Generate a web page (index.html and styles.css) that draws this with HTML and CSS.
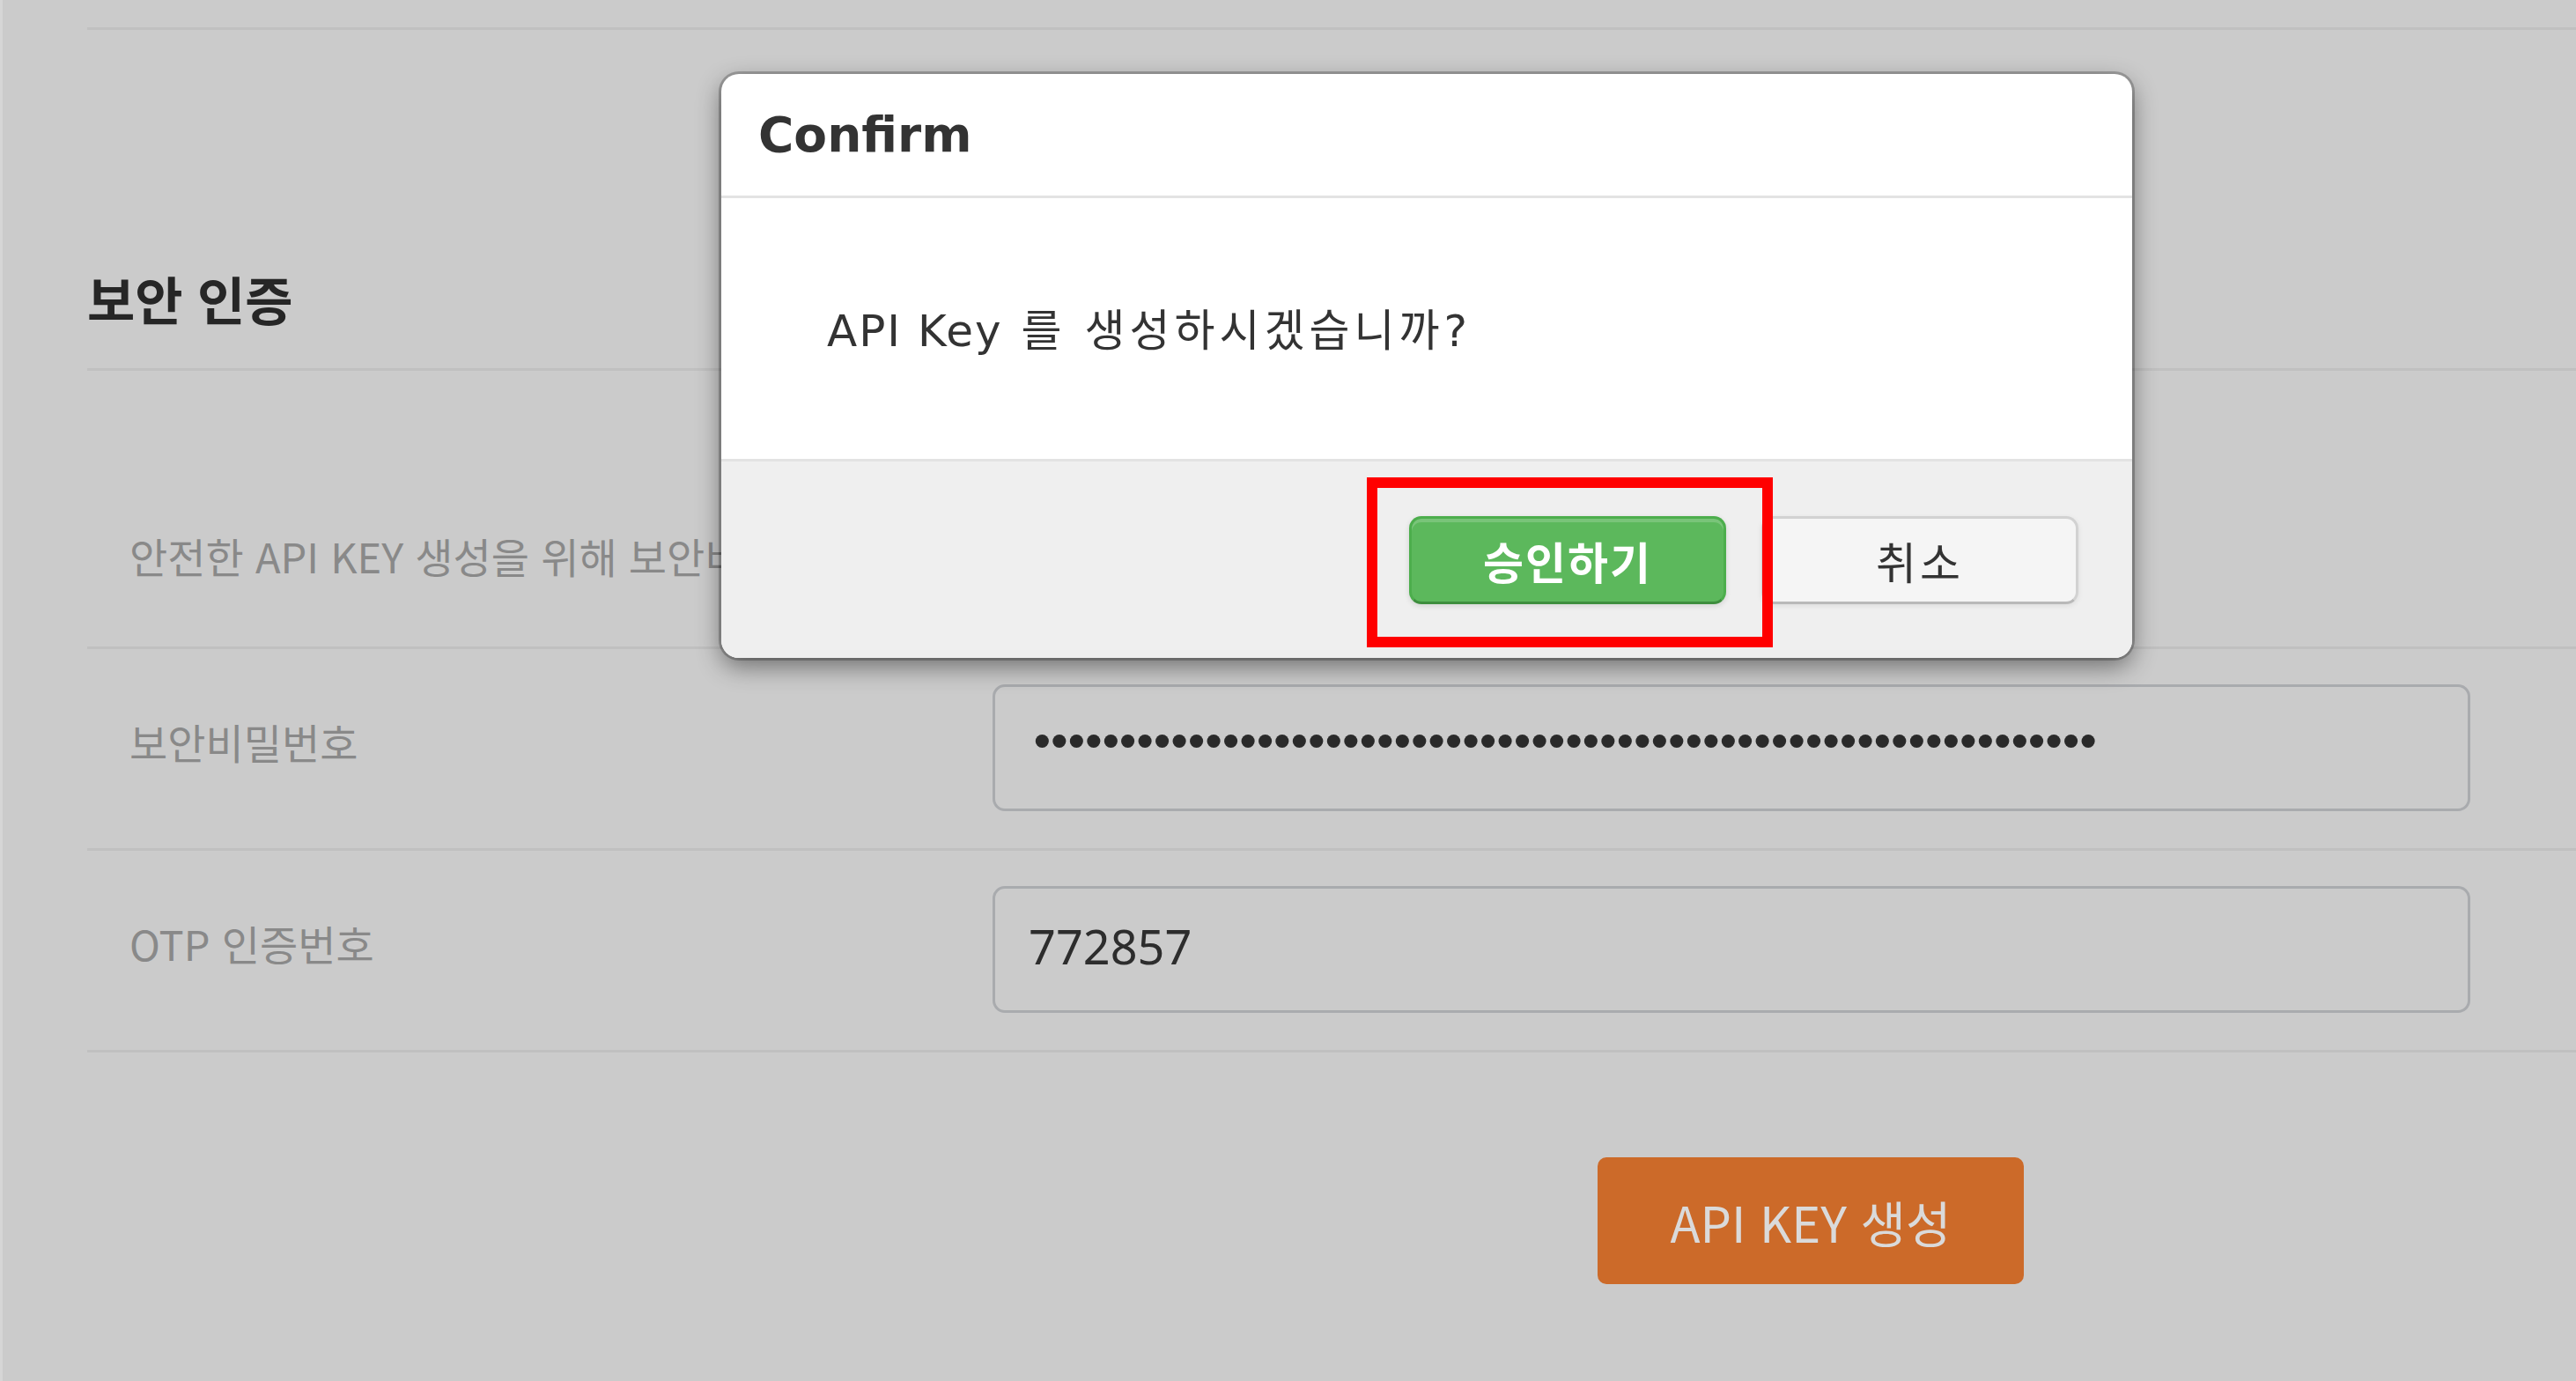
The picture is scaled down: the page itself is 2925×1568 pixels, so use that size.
FILE: index.html
```html
<!DOCTYPE html>
<html lang="ko">
<head>
<meta charset="utf-8">
<title>보안 인증</title>
<link rel="stylesheet" href="styles.css">
</head>
<body>
<div class="page">
  <section class="sec">
    <div class="sec-head"><h2 class="sec-title">보안 인증</h2></div>
    <div class="row row-info"><p class="label">안전한 API KEY 생성을 위해 보안비밀번호와 OTP 인증번호를 입력해 주세요.</p></div>
    <div class="row">
      <label class="label label-field">보안비밀번호</label>
      <div class="field"><span class="dots">••••••••••••••••••••••••••••••••••••••••••••••••••••••••••••••</span></div>
    </div>
    <div class="row">
      <label class="label label-field">OTP 인증번호</label>
      <div class="field"><span class="val">772857</span></div>
    </div>
    <div class="actions"><button class="btn-orange">API KEY 생성</button></div>
  </section>
</div>

<div class="modal">
  <div class="modal-head"><h3 class="modal-title">Confirm</h3></div>
  <div class="modal-body"><p class="msg"><span class="msg-en">API Key</span> 를 생성하시겠습니까?</p></div>
  <div class="modal-foot">
    <button class="btn btn-ok">승인하기</button>
    <button class="btn btn-cancel">취소</button>
  </div>
</div>
<div class="highlight"></div>
</body>
</html>
```

FILE: styles.css
```css
* { box-sizing: border-box; }
html, body { margin: 0; padding: 0; }
body {
  width: 2925px;
  height: 1568px;
  overflow: hidden;
  background: #cbcbcb;
  font-family: "Noto Sans", "Noto Sans CJK KR", sans-serif;
  border-left: 3px solid #d6d6d6;
  position: relative;
}
.page { padding: 31px 0 0 96px; }
.sec { border-top: 3px solid #c0c0c0; }
.sec-head {
  padding: 270px 0 44px 0;
  border-bottom: 3px solid #c0c0c0;
}
.sec-title {
  margin: 0;
  font-family: "Noto Sans CJK KR", sans-serif;
  font-weight: 700;
  font-size: 59px;
  line-height: 70px;
  color: #262626;
}
.row {
  display: flex;
  align-items: flex-start;
  border-bottom: 3px solid #c0c0c0;
  padding: 40px 0 42px 0;
}
.row-info { padding: 180px 0 73px 0; }
.label {
  margin: 0;
  padding-left: 48px;
  font-family: "Noto Sans CJK KR", sans-serif;
  font-size: 47px;
  line-height: 60px;
  color: #898989;
  white-space: nowrap;
}
.label-field {
  flex: none;
  padding-top: 35px;
  line-height: 60px;
  box-sizing: content-box;
  width: 980px;
}
.field {
  width: 1678px;
  height: 144px;
  border: 3px solid #a9abae;
  border-radius: 14px;
  display: flex;
  align-items: center;
  padding-left: 38px;
}
.dots {
  font-family: "DejaVu Sans", sans-serif;
  font-size: 52px;
  letter-spacing: -11.2px;
  color: #2a2a2a;
  margin-top: -12px;
}
.val {
  font-family: "Noto Sans", sans-serif;
  font-size: 54px;
  color: #2d2d2d;
  margin-top: -8px;
}
.actions { padding: 119px 0 0 1715px; }
.btn-orange {
  width: 484px;
  height: 144px;
  border: 0;
  border-radius: 10px;
  background: #cc6a29;
  color: #dadada;
  font-family: "Noto Sans CJK KR", sans-serif;
  font-size: 56px;
  padding: 0;
}

.modal {
  position: absolute;
  left: 816px;
  top: 84px;
  width: 1602px;
  height: 663px;
  background: #fff;
  border-radius: 20px;
  overflow: hidden;
  box-shadow: 0 0 0 3px rgba(0,0,0,0.22), 0 10px 28px rgba(0,0,0,0.45);
  display: flex;
  flex-direction: column;
}
.modal-head {
  height: 141px;
  border-bottom: 3px solid #e3e3e3;
  padding-left: 42px;
  display: flex;
  align-items: center;
}
.modal-title {
  margin: 0;
  font-family: "DejaVu Sans", sans-serif;
  font-weight: 700;
  font-size: 55px;
  color: #333;
}
.modal-body {
  height: 296px;
  display: flex;
  align-items: center;
  padding-left: 120px;
}
.msg {
  margin: 0 0 4px 0;
  font-family: "DejaVu Sans", "Noto Sans CJK KR", sans-serif;
  font-size: 50px;
  letter-spacing: 5px;
  color: #333;
}
.msg-en { letter-spacing: 2px; }
.modal-foot {
  flex: 1;
  background: #efefef;
  border-top: 3px solid #e3e3e3;
  display: flex;
  justify-content: flex-end;
  align-items: center;
  gap: 40px;
  padding-right: 61px;
}
.btn {
  width: 360px;
  height: 100px;
  border-radius: 14px;
  font-family: "Noto Sans CJK KR", sans-serif;
  font-size: 50px;
  padding: 0;
}
.btn-ok {
  background: #5cb85c;
  border: 3px solid #4cae4c;
  border-bottom-color: #3e8e3e;
  color: #fff;
  font-weight: 700;
  letter-spacing: 2px;
  box-shadow: inset 0 4px 0 rgba(255,255,255,0.18), 0 2px 6px rgba(0,0,0,0.12);
}
.btn-cancel {
  background: #f5f5f5;
  border: 3px solid #d2d2d2;
  border-bottom-color: #b9b9b9;
  color: #333;
  letter-spacing: 4px;
  box-shadow: 0 2px 6px rgba(0,0,0,0.08);
}
.highlight {
  position: absolute;
  left: 1549px;
  top: 542px;
  width: 461px;
  height: 193px;
  border: 12px solid #ff0000;
}
```
